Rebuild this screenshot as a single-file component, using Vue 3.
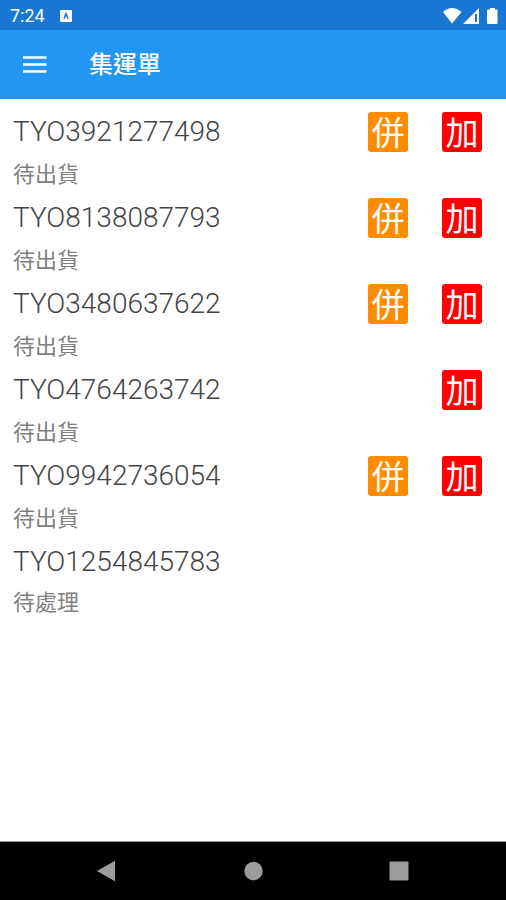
<script setup>
const orders = [
  { id: 'TYO3921277498', status: '待出貨', merge: true, add: true },
  { id: 'TYO8138087793', status: '待出貨', merge: true, add: true },
  { id: 'TYO3480637622', status: '待出貨', merge: true, add: true },
  { id: 'TYO4764263742', status: '待出貨', merge: false, add: true },
  { id: 'TYO9942736054', status: '待出貨', merge: true, add: true },
  { id: 'TYO1254845783', status: '待處理', merge: false, add: false },
]
</script>

<template>
  <div class="screen">
    <div class="status-bar">
      <span class="clock">7:24</span>
      <svg class="notice" viewBox="0 0 12 12" aria-hidden="true">
        <rect width="12" height="12" rx="1" fill="#fff" />
        <path d="M4 8.600 6 3.600l2 5" fill="none" stroke="#1976d2" stroke-width="1.5" />
      </svg>
      <svg class="signals" viewBox="0 0 56 18" aria-hidden="true">
        <path d="M0 5Q9-3 18.500 5L9 16.500Z" fill="#fff" />
        <path d="M36 1V17H20Z" fill="#fff" />
        <path d="M33 7V15" stroke="#1976d2" stroke-width="2" />
        <path d="M44 3.500q0-1 1-1h2V1h5V2.500h1.500q1 0 1 1v12.500q0 1-1 1H45q-1 0-1-1Z" fill="#fff" />
      </svg>
    </div>

    <header class="app-bar">
      <button class="menu" type="button" aria-label="選單">
        <svg viewBox="0 0 24 18" aria-hidden="true">
          <path d="M0 1.500H23.500M0 8.500H23.500M0 15.500H23.500" stroke="#fff" stroke-width="2.600" />
        </svg>
      </button>
      <h1>集運單</h1>
    </header>

    <main>
      <ul class="orders">
        <li v-for="order in orders" :key="order.id" class="order">
          <div class="line">
            <span class="number">{{ order.id }}</span>
            <button v-if="order.merge" class="tag merge" type="button">併</button>
            <button v-if="order.add" class="tag add" type="button">加</button>
          </div>
          <p class="state">{{ order.status }}</p>
        </li>
      </ul>
    </main>

    <nav class="system-nav">
      <button type="button" aria-label="返回">
        <svg viewBox="0 0 22 22"><path d="M1 11 19 0.800V21.200Z" fill="#9c9c9c" /></svg>
      </button>
      <button type="button" aria-label="首頁">
        <svg viewBox="0 0 22 22"><circle cx="11.500" cy="11" r="9.200" fill="#9c9c9c" /></svg>
      </button>
      <button type="button" aria-label="最近使用">
        <svg viewBox="0 0 22 22"><rect x="1.500" y="1.500" width="19" height="19" rx="1" fill="#9c9c9c" /></svg>
      </button>
    </nav>
  </div>
</template>

<style>
body {
  background: #fff;
}
</style>

<style scoped>
.screen {
  display: flex;
  flex-direction: column;
  min-height: 100vh;
  font-family: Roboto, "Noto Sans CJK TC", sans-serif;
}

button {
  display: flex;
  align-items: center;
  justify-content: center;
  padding: 0;
  border: 0;
  background: none;
  font-family: inherit;
}

.status-bar {
  display: flex;
  align-items: center;
  box-sizing: border-box;
  height: 30px;
  padding: 1px 7px 0 10px;
  background: #1976d2;
  color: #fff;
}

.clock {
  font-size: 18px;
  line-height: 28px;
}

.notice {
  width: 12px;
  height: 12px;
  margin-left: 15px;
}

.signals {
  width: 56px;
  height: 18px;
  margin-left: auto;
}

.app-bar {
  display: flex;
  align-items: center;
  gap: 42px;
  box-sizing: border-box;
  height: 69px;
  padding: 1px 23px 0;
  border-bottom: 1px solid #1e88e5;
  background: #2196f3;
  color: #fff;
}

.menu svg {
  display: block;
  width: 24px;
  height: 18px;
}

h1 {
  margin: 0;
  font-size: 24px;
  line-height: 34px;
  font-weight: 500;
}

main {
  flex: 1;
}

.orders {
  margin: 0;
  padding: 11px 24px 0 13px;
  list-style: none;
}

.order {
  height: 86px;
}

.line {
  display: flex;
  align-items: center;
  gap: 34px;
  height: 43px;
}

.number {
  margin-right: auto;
  color: #444;
  font-size: 28px;
  font-weight: 300;
  line-height: 43px;
}

.tag {
  box-sizing: border-box;
  width: 40px;
  height: 40px;
  padding-top: 3px;
  border-radius: 3px;
  color: #fff;
  font-size: 33px;
  line-height: 37px;
}

.merge {
  background: #ff8c00;
}

.add {
  background: #f00;
}

.state {
  margin: 0;
  color: #808080;
  font-size: 22px;
  line-height: 44px;
}

.order:last-child .state {
  line-height: 40px;
}

.system-nav {
  display: flex;
  align-items: center;
  justify-content: space-between;
  height: 58px;
  padding: 0 96px;
  border-top: 1px solid #999;
  background: #000;
}

.system-nav svg {
  display: block;
  width: 22px;
  height: 22px;
}
</style>
